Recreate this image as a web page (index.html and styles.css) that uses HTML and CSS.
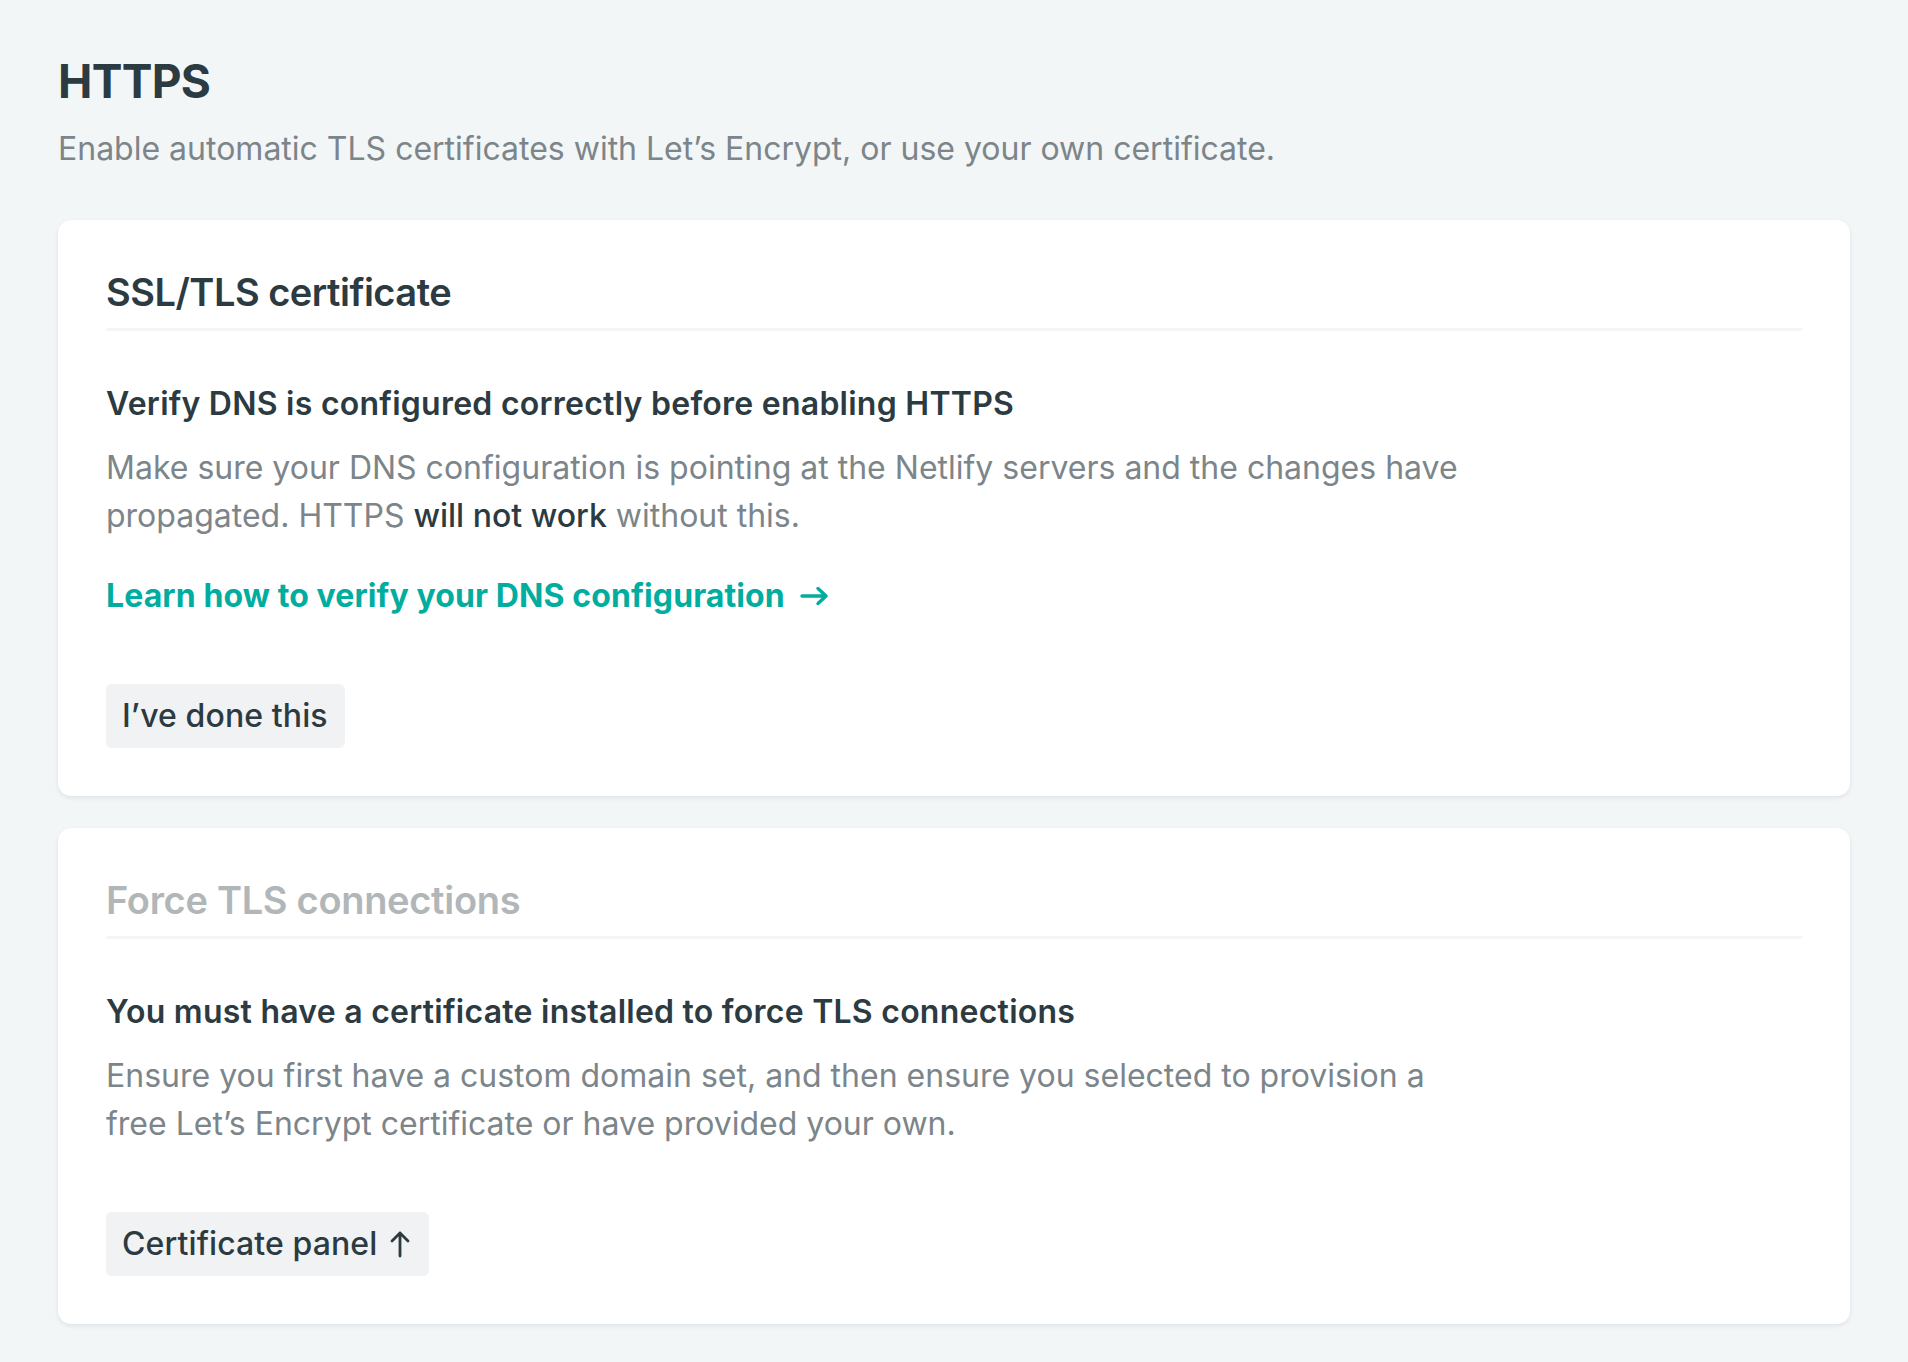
FILE: index.html
```html
<!DOCTYPE html>
<html lang="en">
<head>
<meta charset="utf-8">
<title>HTTPS</title>
<link rel="stylesheet" href="styles.css">
</head>
<body>
<main class="page">
  <header class="page-header">
    <h1 class="page-title">HTTPS</h1>
    <p class="page-subtitle">Enable automatic TLS certificates with Let’s Encrypt, or use your own certificate.</p>
  </header>

  <section class="card">
    <h2 class="card-title">SSL/TLS certificate</h2>
    <div class="card-body">
      <h3 class="notice-title">Verify DNS is configured correctly before enabling HTTPS</h3>
      <p class="notice-text">Make sure your DNS configuration is pointing at the Netlify servers and the changes have propagated. HTTPS <strong>will not work</strong> without this.</p>
      <a class="link" href="#">Learn how to verify your DNS configuration<svg class="link-arrow" viewBox="0 0 30 24" width="30" height="24" aria-hidden="true"><path d="M3 12h24M19 4.5l8 7.5-8 7.5" fill="none" stroke="currentColor" stroke-width="3.4" stroke-linecap="round" stroke-linejoin="round"/></svg></a>
      <button class="btn" type="button">I’ve done this</button>
    </div>
  </section>

  <section class="card">
    <h2 class="card-title card-title--disabled">Force TLS connections</h2>
    <div class="card-body">
      <h3 class="notice-title">You must have a certificate installed to force TLS connections</h3>
      <p class="notice-text notice-text--last">Ensure you first have a custom domain set, and then ensure you selected to provision a free Let’s Encrypt certificate or have provided your own.</p>
      <button class="btn btn--icon" type="button">Certificate panel<svg class="btn-arrow" viewBox="0 0 22 28" width="22" height="28" aria-hidden="true"><path d="M11 26V3M3 11l8-8 8 8" fill="none" stroke="currentColor" stroke-width="2.8" stroke-linecap="round" stroke-linejoin="round"/></svg></button>
    </div>
  </section>
</main>
</body>
</html>
```

FILE: styles.css
```css
* {
  box-sizing: border-box;
}

html, body {
  margin: 0;
  padding: 0;
  background: #f3f6f7;
}

body {
  font-family: "Inter", "Noto Sans", "Liberation Sans", sans-serif;
  color: #2c3a41;
  -webkit-font-smoothing: antialiased;
}

.page {
  padding: 49px 58px 40px;
  display: flex;
  flex-direction: column;
}

.page-header {
  margin-bottom: 47px;
}

.page-title {
  margin: 0;
  font-size: 46px;
  line-height: 64px;
  font-weight: 700;
  letter-spacing: -0.7px;
  color: #2c3a41;
}

.page-subtitle {
  margin: 12px 0 0;
  font-size: 32px;
  line-height: 48px;
  color: #7c858a;
  font-weight: 400;
}

.card {
  background: #ffffff;
  border-radius: 13px;
  box-shadow: 0 2px 4px rgba(14, 30, 37, 0.08), 0 0 1px rgba(14, 30, 37, 0.06);
  padding: 48px;
  margin-bottom: 32px;
}

.card-title {
  margin: 0;
  padding-bottom: 12px;
  border-bottom: 3px solid #f3f5f6;
  font-size: 38px;
  line-height: 48px;
  font-weight: 600;
  letter-spacing: -0.5px;
  color: #2c3a41;
}

.card-title--disabled {
  color: #b1b6b9;
  letter-spacing: -0.3px;
}

.card-body {
  padding-top: 49px;
  display: flex;
  flex-direction: column;
  align-items: flex-start;
}

.notice-title {
  margin: 0 0 16px;
  font-size: 32px;
  line-height: 48px;
  font-weight: 600;
  letter-spacing: 0.25px;
  color: #2c3a41;
}

.notice-text {
  margin: 0 0 32px;
  max-width: 1372px;
  font-size: 32px;
  line-height: 48px;
  color: #7c858a;
}

.notice-text strong {
  font-weight: 500;
  color: #2c3a41;
}

.notice-text--last {
  margin-bottom: 64px;
}

.link {
  display: inline-flex;
  align-items: center;
  font-size: 32px;
  line-height: 48px;
  font-weight: 700;
  letter-spacing: 0.1px;
  color: #00ad9f;
  text-decoration: none;
  margin-bottom: 64px;
}

.link-arrow {
  margin-left: 14px;
}

.btn {
  display: inline-flex;
  align-items: center;
  border: 0;
  border-radius: 6px;
  background: #f0f2f3;
  padding: 8px 17px 8px 16px;
  font-family: inherit;
  font-size: 32px;
  line-height: 48px;
  font-weight: 500;
  letter-spacing: 0.1px;
  color: #2c3a41;
  cursor: pointer;
}

.btn--icon {
  padding-right: 18px;
}

.btn-arrow {
  margin-left: 12px;
}
```
